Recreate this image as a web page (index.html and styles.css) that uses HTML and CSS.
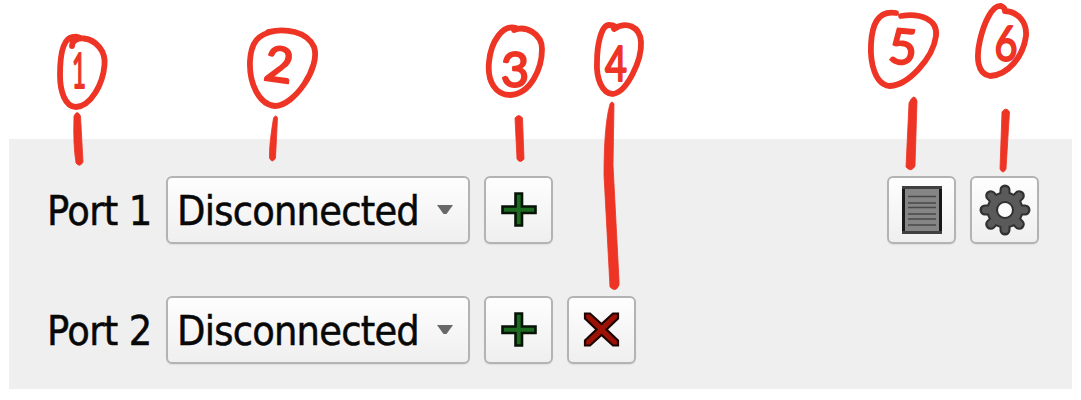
FILE: index.html
```html
<!DOCTYPE html>
<html lang="en">
<head>
<meta charset="utf-8">
<title>Ports</title>
<link rel="stylesheet" href="styles.css">
</head>
<body>
<svg class="defs" width="0" height="0" aria-hidden="true">
  <symbol id="plus" viewBox="0 0 40 40"><path d="M16.500 3.500h6.500v13h13.500v6.500H23v12.500h-6.500V23H3.500v-6.500h13z" fill="#1d6b20" stroke="#071307" stroke-width="2.6"/></symbol>
  <symbol id="cross" viewBox="0 0 40 40"><path d="M3 3.500h5L19.500 14 31 3.500h5v5L24.500 19.500 36 30.500v5h-5L19.500 25 8 35.500H3v-5L14.500 19.500 3 8.500z" fill="#9c1205" stroke="#1d0503" stroke-width="2.200"/></symbol>
  <symbol id="arrow" viewBox="0 0 16 10"><path d="M0 0h16L9.500 9h-3z" fill="#686868"/></symbol>
</svg>
<main class="panel">
  <div class="row">
    <span class="label">Port 1</span>
    <button class="combo"><span class="value">Disconnected</span><svg class="arrow"><use href="#arrow"/></svg></button>
    <button class="tool"><svg class="icon"><use href="#plus"/></svg></button>
    <div class="actions">
      <button class="tool"><svg class="page" viewBox="0 0 40 48">
        <path d="M0 0h40v48H0z" fill="#858585"/>
        <path d="M1.500 0v48M38.500 0v48" stroke="#181818" stroke-width="3"/>
        <path d="M0 1.500h40M0 46.500h40" stroke="#404040" stroke-width="3"/>
        <path d="M6 10.500h28M6 17h28M6 21.500h28M6 28h28M6 33h28M6 39h28" stroke="#484848" stroke-width="1.700"/>
      </svg></button>
      <button class="tool"><svg class="gear" viewBox="-27 -27 54 54">
        <g stroke="#303030" stroke-width="11" stroke-linecap="round"><path d="M0-20V20M-20 0H20M-14.300-14.300L14.300 14.300M14.300-14.300L-14.300 14.300"/></g>
        <circle r="18.500" fill="#303030"/>
        <g stroke="#5a5a5a" stroke-width="7" stroke-linecap="round"><path d="M0-19.500V19.500M-19.500 0H19.500M-14-14L14 14M14-14L-14 14"/></g>
        <circle r="16.500" fill="#5a5a5a"/>
        <circle r="8" fill="#fbfbfb" stroke="#303030" stroke-width="2"/>
      </svg></button>
    </div>
  </div>
  <div class="row">
    <span class="label">Port 2</span>
    <button class="combo"><span class="value">Disconnected</span><svg class="arrow"><use href="#arrow"/></svg></button>
    <button class="tool"><svg class="icon"><use href="#plus"/></svg></button>
    <button class="tool"><svg class="icon"><use href="#cross"/></svg></button>
  </div>
</main>
<svg class="notes" viewBox="0 0 1081 400">
  <g class="ring">
    <path d="M72 46C72 40 78 38 84 38.500C96 40 106 51 104.500 65C103 84 91 106 76 107C65 107 60 91 60 75C60 55 63 38 73 37Q77 36 80 38"/>
    <path d="M268 32C285 28 307 31 314 47C321 67 294 106 275 106C259 105 249 83 250 61C251 42 258 34 275 31"/>
    <path d="M514 30C526 25 542 34 542 49C542 68 531 94 510 95C496 95 487 82 489 62C491 41 503 24 516 28"/>
    <path d="M614 29C626 21 640 26 641 42C642 60 627 92 613 94C602 94 596 78 597 62C597 46 601 25 609 25Q613 25 616 27"/>
    <path d="M901 16C920 13 938 19 936 36C933 58 908 86 889 86C875 84 870 63 871 44C872 26 877 10 896 13"/>
    <path d="M1005 11C1019 12 1027 23 1026 36C1023 57 1008 75 990 76C977 74 976 57 980 40C984 23 992 5 1001 6Q1004 7 1005 10"/>
  </g>
  <g class="ink">
    <path d="M74 116Q77 109 80.500 116L83 162Q80 168 76 163Q73 145 74 116z"/>
    <path d="M273.500 118Q276 114 277.500 118L275.500 158Q272 164 269.500 158Q269 145 273.500 118z"/>
    <path d="M515 118Q519 113 522.500 118L524 159Q520 164 517 159Z"/>
    <path d="M610 104Q612 100 614 104L613 165L619 280V285Q616 293 610 287L604 175Q604 125 610 104z"/>
    <path d="M909 103Q914 92 917 101L915 166Q911 173 906 167z"/>
    <path d="M1002 112Q1006 106 1009.500 112L1006 169Q1003 175 1000 169z"/>
  </g>
  <g class="digits">
    <text x="79" y="88" textLength="14" lengthAdjust="spacingAndGlyphs">1</text>
    <text x="279" y="82" transform="rotate(8 279 64)">2</text>
    <text x="515" y="87">3</text>
    <text x="616" y="81" textLength="22" lengthAdjust="spacingAndGlyphs">4</text>
    <text x="903" y="64" transform="rotate(5 903 45)">5</text>
    <text x="1006" y="61" textLength="23" lengthAdjust="spacingAndGlyphs">6</text>
  </g>
</svg>
</body>
</html>
```
FILE: styles.css
```css
* { box-sizing: border-box; }
body { margin: 0; padding: 139px 9px 0; height: 400px; overflow: hidden; background: #fff; position: relative; }
.defs { position: absolute; }
.panel { height: 250px; padding: 37px 33px 0 38px; display: flex; flex-direction: column; gap: 52px; background: #efefef; }
.row { display: flex; height: 68px; align-items: center; gap: 14px; font: 41px/1 "DejaVu Sans Condensed", "DejaVu Sans", sans-serif; font-stretch: condensed; color: #080808; -webkit-text-stroke: .5px #080808; }
.label { width: 105px; padding-top: 3px; letter-spacing: -.6px; white-space: nowrap; }
.value { padding-top: 3px; }
.combo, .tool { height: 68px; padding: 0; border: 2px solid #b3b3b3; border-radius: 6px; background: linear-gradient(#fefefe, #efefef); font: inherit; color: inherit; display: flex; align-items: center; box-shadow: 0 1px 1px #dedede; }
.combo { width: 304px; padding: 0 15px 0 9px; justify-content: space-between; letter-spacing: -.75px; }
.tool { width: 69px; justify-content: center; }
.icon { width: 40px; height: 40px; }
.arrow { width: 16px; height: 10px; }
.actions { display: flex; gap: 14px; margin-left: auto; }
.page { width: 40px; height: 48px; }
.gear { width: 54px; height: 54px; }
.notes { position: absolute; left: 0; top: 0; width: 1081px; height: 400px; pointer-events: none; }
.ring { fill: none; stroke: #ee3424; stroke-width: 5.8; stroke-linecap: round; stroke-linejoin: round; }
.ink { fill: #ee3424; stroke: #ee3424; stroke-width: .8; }
.digits { font: 49px "Lato", sans-serif; fill: #ee3424; stroke: #ee3424; stroke-width: 2; stroke-linejoin: round; text-anchor: middle; }
```
